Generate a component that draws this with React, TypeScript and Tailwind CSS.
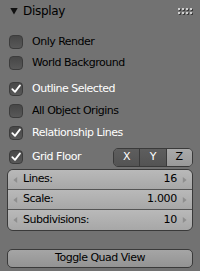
import React from "react";

const font = { fontFamily: '"DejaVu Sans", "Liberation Sans", sans-serif' };

function Check({ on }: { on: boolean }) {
  return (
    <div className="relative h-[14px] w-[14px] shrink-0 rounded-[4px] border border-[#3c3c3c] bg-gradient-to-b from-[#474747] to-[#585858]">
      {on && (
        <svg viewBox="0 0 14 14" className="absolute -left-px -top-px h-[14px] w-[14px]">
          <path d="M3.3 7.2 L6 9.9 L11 3.4" fill="none" stroke="#fff" strokeWidth="1.8" strokeLinecap="round" strokeLinejoin="round" />
        </svg>
      )}
    </div>
  );
}

function Row({ label, on, className }: { label: string; on: boolean; className: string }) {
  return (
    <div className={`flex h-[22px] items-center gap-[9px] pl-[9px] ${className}`}>
      <Check on={on} />
      <span className={`text-[11px] tracking-[-0.5px] ${on ? "text-white" : "text-black"}`}>{label}</span>
    </div>
  );
}

function Num({ label, value, className }: { label: string; value: string; className: string }) {
  return (
    <div className={`flex h-[20px] items-center bg-gradient-to-b from-[#b9b9b9] to-[#a7a7a7] px-[5px] ${className}`}>
      <svg viewBox="0 0 6 8" className="h-[8px] w-[5px]">
        <path d="M5 0.5 L0.5 4 L5 7.5 Z" fill="#8e8e8e" />
      </svg>
      <span className="ml-[5px] flex-1 text-[11px] tracking-[-0.5px] text-black">{label}</span>
      <span className="mr-[5px] text-[11px] tracking-[-0.3px] text-black">{value}</span>
      <svg viewBox="0 0 6 8" className="h-[8px] w-[5px]">
        <path d="M1 0.5 L5.5 4 L1 7.5 Z" fill="#8e8e8e" />
      </svg>
    </div>
  );
}

export default function App() {
  return (
    <div className="h-[271px] w-[200px] overflow-hidden bg-[#727272]" style={font}>
      <div className="flex h-[21px] items-center pl-[10px] pr-[8px]">
        <svg viewBox="0 0 8 8" className="h-[8px] w-[8px]">
          <path d="M0.3 1 L7.7 1 L4 7.5 Z" fill="#111" />
        </svg>
        <span className="ml-[5px] flex-1 text-[12px] tracking-[-0.3px] text-black">Display</span>
        <div className="grid grid-cols-4 gap-x-[2px] gap-y-[2px]">
          {Array.from({ length: 8 }).map((_, i) => (
            <div key={i} className="h-[2px] w-[2px] bg-[#cfcfcf] shadow-[1px_1px_0_#3a3a3a]" />
          ))}
        </div>
      </div>

      <Row label="Only Render" on={false} className="mt-[10px]" />
      <Row label="World Background" on={false} className="mt-[-1px]" />
      <Row label="Outline Selected" on={true} className="mt-[4px]" />
      <Row label="All Object Origins" on={false} className="" />
      <Row label="Relationship Lines" on={true} className="" />

      <div className="mt-[2px] flex h-[22px] items-center pl-[9px] pr-[7px]">
        <Check on={true} />
        <span className="ml-[9px] flex-1 text-[11px] tracking-[-0.5px] text-white">Grid Floor</span>
        <div className="flex h-[19px] w-[80px] overflow-hidden rounded-[5px] border border-[#3a3a3a] text-[11px]">
          <div className="flex flex-1 items-center justify-center border-r border-[#3a3a3a] bg-gradient-to-b from-[#5e5e5e] to-[#535353] text-white">X</div>
          <div className="flex flex-1 items-center justify-center border-r border-[#3a3a3a] bg-gradient-to-b from-[#5e5e5e] to-[#535353] text-white">Y</div>
          <div className="flex flex-1 items-center justify-center bg-gradient-to-b from-[#aaaaaa] to-[#999999] text-black">Z</div>
        </div>
      </div>

      <div className="mx-[7px] mt-[1px] overflow-hidden rounded-[6px] border border-[#3a3a3a]">
        <Num label="Lines:" value="16" className="border-b border-[#555]" />
        <Num label="Scale:" value="1.000" className="border-b border-[#555]" />
        <Num label="Subdivisions:" value="10" className="" />
      </div>

      <div className="mx-[7px] mt-[18px] flex h-[19px] items-center justify-center rounded-[5px] border border-[#3a3a3a] bg-gradient-to-b from-[#a5a5a5] to-[#939393] text-[11px] tracking-[-0.5px] text-black">
        Toggle Quad View
      </div>
    </div>
  );
}
